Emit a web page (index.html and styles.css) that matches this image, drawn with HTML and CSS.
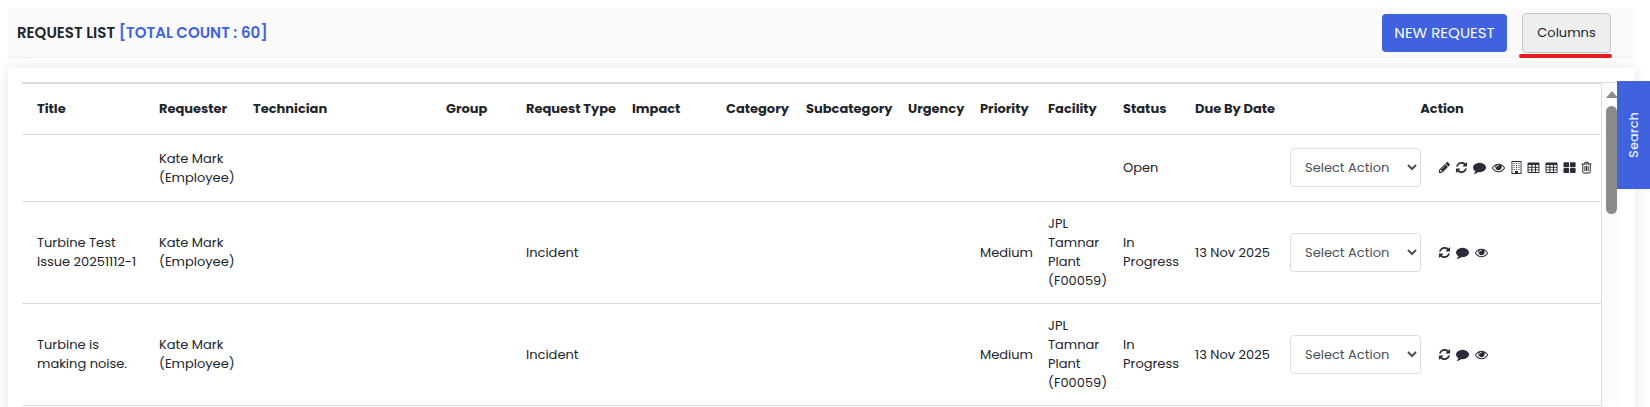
FILE: index.html
```html
<!DOCTYPE html>
<html lang="en">
<head>
    <meta charset="UTF-8">
    <meta name="viewport" content="width=device-width, initial-scale=1.0">
    <title>Request List</title>
    <link rel="stylesheet" href="styles.css">
</head>
<body>
    <!-- icon set -->
    <svg class="icon-defs" aria-hidden="true">
        <symbol id="i-pencil" viewBox="0 0 1792 1792"><path d="M491 1536l91-91-235-235-91 91v107h128v128h107zm523-928q0-22-22-22-10 0-17 7l-542 542q-7 7-7 17 0 22 22 22 10 0 17-7l542-542q7-7 7-17zm-54-192l416 416-832 832h-416v-416zm683 96q0 53-37 90l-166 166-416-416 166-165q36-38 90-38 53 0 91 38l235 234q37 39 37 91z"/></symbol>
        <symbol id="i-refresh" viewBox="0 0 1792 1792"><path d="M1639 1056q0 5-1 7-64 268-268 434.5t-478 166.5q-146 0-282.5-55t-243.5-157l-129 129q-19 19-45 19t-45-19-19-45v-448q0-26 19-45t45-19h448q26 0 45 19t19 45-19 45l-137 137q71 66 161 102t187 36q134 0 250-65t186-179q11-17 53-117 8-23 30-23h192q13 0 22.5 9.5t9.5 22.5zm25-800v448q0 26-19 45t-45 19h-448q-26 0-45-19t-19-45 19-45l138-138q-148-137-349-137-134 0-250 65t-186 179q-11 17-53 117-8 23-30 23h-199q-13 0-22.5-9.5t-9.5-22.5v-7q65-268 270-434.5t480-166.5q146 0 284 55.5t245 156.5l130-129q19-19 45-19t45 19 19 45z"/></symbol>
        <symbol id="i-comment" viewBox="0 0 1792 1792"><path d="M1792 896q0 174-120 321.5t-326 233-450 85.5q-70 0-145-8-198 175-460 242-49 14-114 22-17 2-30.5-9t-17.5-29v-1q-3-4-.5-12t2-10 4.5-9.5l6-9 7-8.5 8-9q7-8 31-34.5t34.5-38 31-39.5 32.5-51 27-59 26-76q-157-89-247.5-220t-90.5-281q0-130 71-248.5t191-204.5 286-136.5 348-50.5q244 0 450 85.5t326 233 120 321.5z"/></symbol>
        <symbol id="i-eye" viewBox="0 0 1792 1792"><path d="M1664 960q-152-236-381-353 61 104 61 225 0 185-131.5 316.5t-316.5 131.5-316.5-131.5-131.5-316.5q0-121 61-225-229 117-381 353 133 205 333.5 326.5t434.5 121.5 434.5-121.5 333.5-326.5zm-720-384q0-20-14-34t-34-14q-125 0-214.5 89.5t-89.5 214.5q0 20 14 34t34 14 34-14 14-34q0-86 61-147t147-61q20 0 34-14t14-34zm848 384q0 34-20 69-140 230-376.5 368.5t-499.5 138.5-499.5-139-376.5-368q-20-35-20-69t20-69q140-229 376.5-368t499.5-139 499.5 139 376.5 368q20 35 20 69z"/></symbol>
        <symbol id="i-building" viewBox="0 0 13 13"><path fill-rule="evenodd" d="M1.500 0h10v13h-10zM2.400.9v11.200H5v-2h3v2h2.600V.9z"/><path d="M3.500 2h1v1h-1zm2.500 0h1v1H6zm2.500 0h1v1h-1zM3.500 4h1v1h-1zM6 4h1v1H6zm2.500 0h1v1h-1zM3.500 6h1v1h-1zM6 6h1v1H6zm2.500 0h1v1h-1zM3.500 8h1v1h-1zM6 8h1v1H6zm2.500 0h1v1h-1z"/></symbol>
        <symbol id="i-table" viewBox="0 0 13 13"><path fill-rule="evenodd" d="M1.500 1.500h10q1 0 1 1v8.500q0 1-1 1h-10q-1 0-1-1V2.500q0-1 1-1zM1.500 4v1.800h2.800V4zm3.800 0v1.800h2.700V4zM9 4v1.800h2.600V4zM1.500 6.700v1.700h2.800V6.700zm3.800 0v1.700h2.700V6.700zm3.700 0v1.700h2.600V6.700zM1.500 9.300v1.800h2.800V9.300zm3.800 0v1.800h2.700V9.300zm3.700 0v1.800h2.600V9.300z"/></symbol>
        <symbol id="i-grid" viewBox="0 0 13 13"><rect x=".5" y="1.200" width="5.600" height="5" rx=".8"/><rect x="7" y="1.200" width="5.600" height="5" rx=".8"/><rect x=".5" y="7" width="5.600" height="5" rx=".8"/><rect x="7" y="7" width="5.600" height="5" rx=".8"/></symbol>
        <symbol id="i-trash" viewBox="0 0 13 13"><path fill="none" stroke="currentColor" d="M1.500 3h10M4.300 3l.6-1.700h3.200L8.700 3M2.800 3v8.200q0 .8.800.8h5.800q.8 0 .8-.8V3M4.900 5v5M6.500 5v5M8.100 5v5"/></symbol>
    </svg>

    <header class="page-header">
        <h1 class="page-title">REQUEST LIST <span class="total-count">[TOTAL COUNT : 60]</span></h1>
        <div class="header-actions">
            <button type="button" class="btn btn-primary">NEW REQUEST</button>
            <div class="columns-wrap">
                <button type="button" class="btn btn-columns">Columns</button>
            </div>
        </div>
    </header>

    <main class="card">
        <div class="table-scroll">
            <table class="request-table">
                <colgroup>
                    <col class="col-title">
                    <col class="col-requester">
                    <col class="col-technician">
                    <col class="col-group">
                    <col class="col-type">
                    <col class="col-impact">
                    <col class="col-category">
                    <col class="col-subcategory">
                    <col class="col-urgency">
                    <col class="col-priority">
                    <col class="col-facility">
                    <col class="col-status">
                    <col class="col-due">
                    <col>
                </colgroup>
                <thead>
                    <tr>
                        <th>Title</th>
                        <th>Requester</th>
                        <th>Technician</th>
                        <th>Group</th>
                        <th>Request Type</th>
                        <th>Impact</th>
                        <th>Category</th>
                        <th>Subcategory</th>
                        <th>Urgency</th>
                        <th>Priority</th>
                        <th>Facility</th>
                        <th>Status</th>
                        <th>Due By Date</th>
                        <th class="th-action">Action</th>
                    </tr>
                </thead>
                <tbody>
                    <tr>
                        <td></td>
                        <td>Kate Mark (Employee)</td>
                        <td></td>
                        <td></td>
                        <td></td>
                        <td></td>
                        <td></td>
                        <td></td>
                        <td></td>
                        <td></td>
                        <td></td>
                        <td>Open</td>
                        <td></td>
                        <td class="td-action">
                            <div class="actions">
                                <select class="action-select" aria-label="Select Action">
                                    <option>Select Action</option>
                                </select>
                                <div class="icons">
                                    <a href="#" class="icon-sm" aria-label="Edit"><svg class="icon"><use href="#i-pencil"/></svg></a>
                                    <a href="#" class="icon-sm" aria-label="Refresh"><svg class="icon"><use href="#i-refresh"/></svg></a>
                                    <a href="#" class="icon-lg" aria-label="Comment"><svg class="icon"><use href="#i-comment"/></svg></a>
                                    <a href="#" class="icon-lg" aria-label="View"><svg class="icon"><use href="#i-eye"/></svg></a>
                                    <a href="#" class="icon-xs" aria-label="Facility"><svg class="icon"><use href="#i-building"/></svg></a>
                                    <a href="#" aria-label="Table"><svg class="icon"><use href="#i-table"/></svg></a>
                                    <a href="#" aria-label="Table"><svg class="icon"><use href="#i-table"/></svg></a>
                                    <a href="#" aria-label="Grid"><svg class="icon"><use href="#i-grid"/></svg></a>
                                    <a href="#" class="icon-xs" aria-label="Delete"><svg class="icon"><use href="#i-trash"/></svg></a>
                                </div>
                            </div>
                        </td>
                    </tr>
                    <tr>
                        <td>Turbine Test Issue 20251112-1</td>
                        <td>Kate Mark (Employee)</td>
                        <td></td>
                        <td></td>
                        <td>Incident</td>
                        <td></td>
                        <td></td>
                        <td></td>
                        <td></td>
                        <td>Medium</td>
                        <td>JPL Tamnar Plant (F00059)</td>
                        <td>In Progress</td>
                        <td>13 Nov 2025</td>
                        <td class="td-action">
                            <div class="actions">
                                <select class="action-select" aria-label="Select Action">
                                    <option>Select Action</option>
                                </select>
                                <div class="icons">
                                    <a href="#" class="icon-sm" aria-label="Refresh"><svg class="icon"><use href="#i-refresh"/></svg></a>
                                    <a href="#" class="icon-lg" aria-label="Comment"><svg class="icon"><use href="#i-comment"/></svg></a>
                                    <a href="#" class="icon-lg" aria-label="View"><svg class="icon"><use href="#i-eye"/></svg></a>
                                </div>
                            </div>
                        </td>
                    </tr>
                    <tr>
                        <td>Turbine is making noise.</td>
                        <td>Kate Mark (Employee)</td>
                        <td></td>
                        <td></td>
                        <td>Incident</td>
                        <td></td>
                        <td></td>
                        <td></td>
                        <td></td>
                        <td>Medium</td>
                        <td>JPL Tamnar Plant (F00059)</td>
                        <td>In Progress</td>
                        <td>13 Nov 2025</td>
                        <td class="td-action">
                            <div class="actions">
                                <select class="action-select" aria-label="Select Action">
                                    <option>Select Action</option>
                                </select>
                                <div class="icons">
                                    <a href="#" class="icon-sm" aria-label="Refresh"><svg class="icon"><use href="#i-refresh"/></svg></a>
                                    <a href="#" class="icon-lg" aria-label="Comment"><svg class="icon"><use href="#i-comment"/></svg></a>
                                    <a href="#" class="icon-lg" aria-label="View"><svg class="icon"><use href="#i-eye"/></svg></a>
                                </div>
                            </div>
                        </td>
                    </tr>
                </tbody>
            </table>
            <div class="scrollbar" aria-hidden="true">
                <div class="scroll-arrow"></div>
                <div class="scroll-thumb"></div>
            </div>
        </div>
    </main>

    <button type="button" class="search-tab"><span class="search-label">Search</span></button>
</body>
</html>
```

FILE: styles.css
```css
* {
    box-sizing: border-box;
}

body {
    margin: 0;
    padding: 8px 15px 0 8px;
    font-family: Poppins, Inter, sans-serif;
    font-size: 13px;
    line-height: 19px;
    color: #212529;
    background-color: #fff;
    overflow: hidden;
}

.icon-defs {
    display: none;
}

/* header */
.page-header {
    display: flex;
    justify-content: space-between;
    align-items: center;
    height: 50px;
    padding: 0 24px 0 9px;
    background-color: #fafafa;
    border-bottom: 1px solid #f0f0f0;
    border-radius: 4px 4px 0 0;
}

.page-title {
    margin: 0;
    font-size: 15px;
    font-weight: 600;
}

.total-count {
    color: #4062df;
}

.header-actions {
    display: flex;
    align-items: center;
    gap: 15px;
}

.btn {
    font-family: inherit;
    border-radius: 4px;
    cursor: pointer;
}

.btn-primary {
    width: 125px;
    height: 38px;
    padding: 0;
    border: none;
    background-color: #4062df;
    color: #fff;
    font-size: 15px;
}

.columns-wrap {
    position: relative;
}

.btn-columns {
    display: block;
    width: 89px;
    height: 40px;
    padding: 0;
    border: 1px solid #c8c8c8;
    background-color: #efefef;
    color: #212529;
    font-size: 13px;
}

/* red marker under the columns button */
.columns-wrap::after {
    content: "";
    position: absolute;
    left: -3px;
    right: -1px;
    bottom: -5px;
    height: 4px;
    border-radius: 2px;
    background-color: #e81c1c;
}

/* table */
.card {
    margin-top: 10px;
    padding: 14px;
    background-color: #fff;
    border-radius: 4px;
    box-shadow: 0 0 15px rgba(0, 0, 0, 0.1);
}

.table-scroll {
    display: flex;
    border-top: 1px solid #dcdcdc;
}

.request-table {
    flex: 1;
    min-width: 0;
    table-layout: fixed;
    border-collapse: separate;
    border-spacing: 0;
    border-top: 1px solid #dcdcdc;
    border-right: 1px solid #dcdcdc;
}

.col-title { width: 130px; }
.col-requester { width: 94px; }
.col-technician { width: 193px; }
.col-group { width: 80px; }
.col-type { width: 106px; }
.col-impact { width: 94px; }
.col-category { width: 80px; }
.col-subcategory { width: 102px; }
.col-urgency { width: 72px; }
.col-priority { width: 68px; }
.col-facility { width: 75px; }
.col-status { width: 72px; }
.col-due { width: 95px; }

.request-table th,
.request-table td {
    padding: 12px 0 13px 7px;
    border-bottom: 1px solid #dcdcdc;
    text-align: left;
    vertical-align: middle;
}

.request-table th {
    height: 51px;
    font-weight: 700;
    white-space: nowrap;
}

.request-table th:first-child,
.request-table td:first-child {
    padding-left: 15px;
    padding-right: 14px;
}

.request-table .th-action {
    padding-left: 0;
    text-align: center;
}

.request-table .td-action {
    padding: 13px 0 14px 7px;
}

.actions {
    display: flex;
    align-items: center;
    gap: 18px;
}

.action-select {
    width: 131px;
    height: 39px;
    padding: 0 1px 0 10px;
    border: 1px solid #dcdfe2;
    border-radius: 4px;
    background-color: #fff;
    color: #495057;
    font-family: inherit;
    font-size: 13px;
}

.icons {
    display: flex;
    align-items: center;
    gap: 6px;
}

.icons a {
    display: flex;
    justify-content: center;
    width: 12px;
    color: #2b2c38;
}

.icons .icon-xs { width: 10px; }
.icons .icon-sm { width: 11px; }
.icons .icon-lg { width: 13px; }

.icon {
    flex: none;
    width: 13px;
    height: 13px;
    fill: currentColor;
}

/* scrollbar */
.scrollbar {
    display: flex;
    flex-direction: column;
    align-items: center;
    gap: 8px;
    width: 19px;
    padding-top: 8px;
    background-color: #fcfcfc;
}

.scroll-arrow {
    border-left: 6px solid transparent;
    border-right: 6px solid transparent;
    border-bottom: 7px solid #8b8b8b;
}

.scroll-thumb {
    width: 11px;
    height: 108px;
    border-radius: 6px;
    background-color: #8b8b8b;
}

/* search tab on the right edge */
.search-tab {
    display: flex;
    align-items: center;
    justify-content: center;
    position: fixed;
    top: 81px;
    right: 0;
    width: 33px;
    height: 108px;
    padding: 0;
    border: none;
    background-color: #4062df;
    color: #e6ebff;
    font-family: inherit;
    font-size: 13px;
    font-weight: 500;
    cursor: pointer;
}

.search-label {
    writing-mode: vertical-rl;
    transform: rotate(180deg);
}
```
